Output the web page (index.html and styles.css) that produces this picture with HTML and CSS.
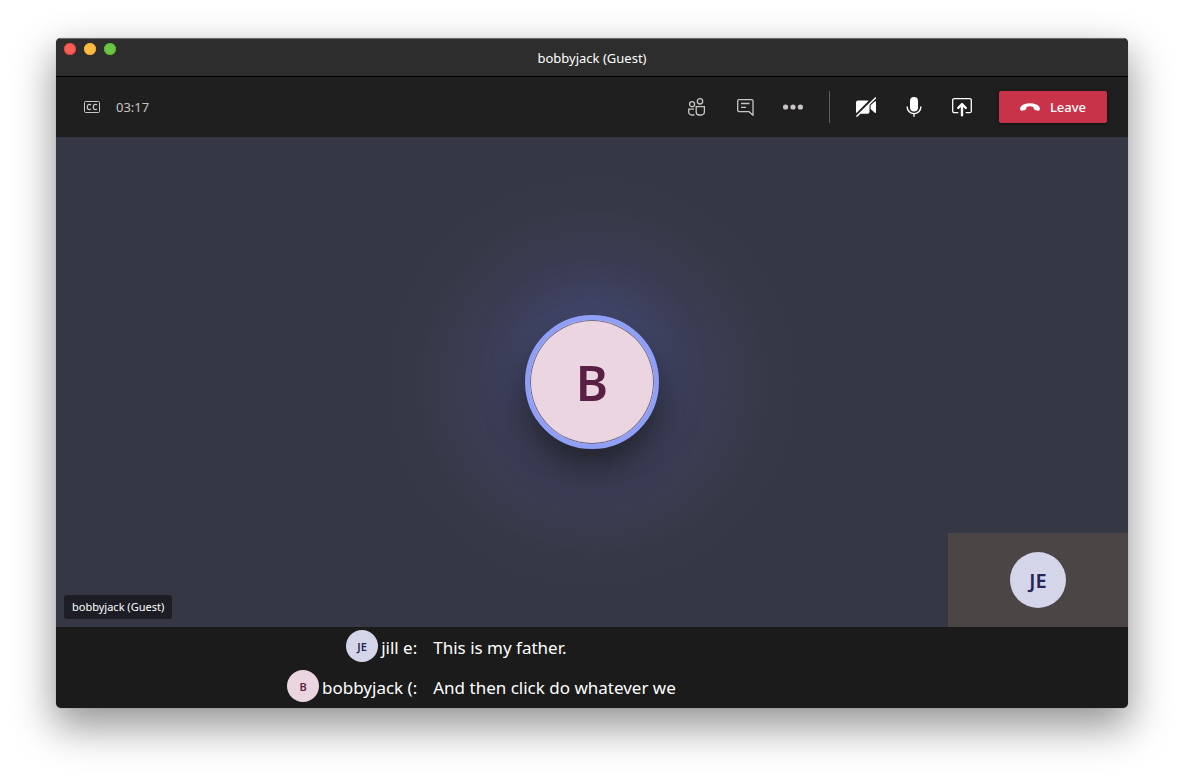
FILE: index.html
```html
<!DOCTYPE html>
<html lang="en">
<head>
<meta charset="utf-8">
<title>bobbyjack (Guest)</title>
<link rel="stylesheet" href="styles.css">
</head>
<body>
<main class="window">
  <header class="titlebar">
    <div class="lights">
      <button class="light light-close" aria-label="Close"></button>
      <button class="light light-min" aria-label="Minimize"></button>
      <button class="light light-max" aria-label="Maximize"></button>
    </div>
    <h1 class="title">bobbyjack (Guest)</h1>
  </header>

  <div class="toolbar">
    <div class="status">
      <svg class="cc" viewBox="0 0 16 12" width="16" height="12" fill="none" stroke="currentColor" aria-label="Captions on">
        <rect x=".5" y=".5" width="15" height="11" rx="1"/>
        <path d="M7 4.200C6.600 3.600 6 3.400 5.400 3.400 4 3.400 3.300 4.500 3.300 6s.8 2.600 2.100 2.600c.6 0 1.200-.3 1.600-.8M13 4.200c-.4-.6-1-.8-1.600-.8-1.400 0-2.100 1.100-2.100 2.600s.8 2.600 2.100 2.600c.6 0 1.200-.3 1.600-.8" stroke-width="1.2"/>
      </svg>
      <time class="timer">03:17</time>
    </div>
    <nav class="actions">
      <button class="tool" aria-label="People">
        <svg viewBox="0 0 20 20" width="20" height="20" fill="none" stroke="currentColor" stroke-width="1.3">
          <circle cx="5.100" cy="7.200" r="2.500"/><circle cx="13" cy="4.300" r="2.700"/>
          <path d="M9.200 9.600h8.200v5.400a3 3 0 0 1-3 3h-2.200a3 3 0 0 1-3-3zM7 12.200H1.700V15a3 3 0 0 0 3 3h2.700"/>
        </svg>
      </button>
      <button class="tool" aria-label="Chat">
        <svg viewBox="0 0 20 20" width="20" height="20" fill="none" stroke="currentColor" stroke-width="1.3" stroke-linejoin="round">
          <path d="M4.100 2.600h12.500a1.400 1.400 0 0 1 1.400 1.400v14.300l-3.900-3.600H4.500a1.800 1.800 0 0 1-1.800-1.800V4a1.400 1.400 0 0 1 1.400-1.400zM6 6.500h8.500M6 10.400h5"/>
        </svg>
      </button>
      <button class="tool" aria-label="More actions">
        <svg viewBox="0 0 20 20" width="20" height="20" fill="currentColor">
          <circle cx="2.600" cy="10" r="2.600"/><circle cx="10" cy="10" r="2.600"/><circle cx="17.400" cy="10" r="2.600"/>
        </svg>
      </button>
      <span class="divider"></span>
      <button class="tool tool-bright" aria-label="Turn camera on">
        <svg viewBox="0 0 20 20" width="20" height="20" fill="currentColor">
          <path d="M2 3.600h9.500a2 2 0 0 1 2 2v9.200a2 2 0 0 1-2 2H2a2 2 0 0 1-2-2V5.600a2 2 0 0 1 2-2zM14.600 8.200l4.200-3.700q1.200-.8 1.200.4v10.400q0 1.200-1.200.4l-4.200-3.700z"/>
          <path d="M-1 19.500 18.500 0" stroke="#1f1f1f" stroke-width="3"/>
          <path d="M.5 19.600 20 .4" stroke="currentColor" stroke-width="1.400"/>
        </svg>
      </button>
      <button class="tool tool-bright" aria-label="Mute">
        <svg viewBox="0 0 20 20" width="20" height="20" fill="none" stroke="currentColor" stroke-width="1.400">
          <rect x="6" y="0" width="8" height="14.400" rx="4" fill="currentColor" stroke="none"/>
          <path d="M3.200 9.600v.6a6.800 6.400 0 0 0 13.600 0v-.6M10 16.600v3.200"/>
        </svg>
      </button>
      <button class="tool tool-bright" aria-label="Share content">
        <svg viewBox="0 0 20 20" width="20" height="20" fill="none" stroke="currentColor" stroke-width="1.300">
          <path d="M6.300 15.700H2.200A1.500 1.500 0 0 1 .7 14.200V3.100a1.500 1.500 0 0 1 1.500-1.500h15.600a1.500 1.500 0 0 1 1.500 1.500v11.100a1.500 1.500 0 0 1-1.500 1.500h-4.100"/>
          <path d="M10 18.200V7.400M6.200 11 10 7.200l3.800 3.800" stroke-width="2.400" stroke-linecap="round" stroke-linejoin="round"/>
        </svg>
      </button>
      <button class="leave">
        <svg viewBox="0 0 20 8" width="20" height="8" fill="currentColor" aria-hidden="true">
          <path d="M10 .3c4.400 0 8 1.300 9.400 3.700.6 1 .6 2.200.2 3.100-.3.600-.8.800-1.500.600l-3.200-.8c-.7-.2-1.100-.6-1.200-1.300l-.3-1.700C12.400 3.500 11.300 3.300 10 3.300s-2.400.2-3.400.6l-.3 1.700c-.1.700-.5 1.100-1.200 1.300l-3.200.8c-.7.200-1.200 0-1.500-.6C0 6.200 0 5 .6 4 2 1.600 5.600.3 10 .3z"/>
        </svg>
        Leave
      </button>
    </nav>
  </div>

  <section class="stage">
    <div class="avatar avatar-main pink">B</div>
    <span class="name-tag">bobbyjack (Guest)</span>
    <div class="self-view"><div class="avatar avatar-self lilac">JE</div></div>
  </section>

  <section class="captions" aria-label="Live captions">
    <div class="caption">
      <div class="speaker"><span class="avatar avatar-small lilac">JE</span><span class="line">jill e:</span></div>
      <p class="line">This is my father.</p>
    </div>
    <div class="caption">
      <div class="speaker"><span class="avatar avatar-small pink">B</span><span class="line">bobbyjack (:</span></div>
      <p class="line">And then click do whatever we</p>
    </div>
  </section>
</main>
</body>
</html>
```
FILE: styles.css
```css
* { box-sizing: border-box; }

body {
  margin: 0;
  min-height: 100vh;
  padding: 38px 56px 74px;
  display: flex;
  background: #fff;
  color: #fff;
  font-family: "Noto Sans", "Open Sans", sans-serif;
}

button {
  border: 0;
  padding: 0;
  background: none;
  color: inherit;
  font: inherit;
}

svg { display: block; }

.window {
  flex: 1;
  display: flex;
  flex-direction: column;
  border-radius: 5px;
  overflow: hidden;
  background: #1b1b1b;
  box-shadow: 0 0 1px rgba(0, 0, 0, .4), 0 17px 40px 2px rgba(0, 0, 0, .42);
}

.titlebar {
  display: grid;
  grid-template-columns: 1fr auto 1fr;
  height: 39px;
  background: #2d2d2d;
  border-top: 1px solid #6c6c6c;
  border-bottom: 1px solid #000;
}

.lights {
  display: flex;
  gap: 8px;
  padding: 4px 8px;
}

.light {
  width: 12px;
  height: 12px;
  border-radius: 50%;
}

.light-close { background: #f95e57; box-shadow: inset 0 0 0 1px #e2443f; }
.light-min { background: #fdbc40; box-shadow: inset 0 0 0 1px #eba937; }
.light-max { background: #6cc644; box-shadow: inset 0 0 0 1px #58b52f; }

.title {
  margin: 0;
  align-self: center;
  font-size: 13px;
  line-height: 18px;
  font-weight: 400;
}

.toolbar {
  display: flex;
  align-items: center;
  justify-content: space-between;
  height: 60px;
  padding: 0 21px 0 28px;
  background: #1f1f1f;
  color: #c8c6c4;
}

.status {
  display: flex;
  align-items: center;
  gap: 16px;
}

.timer { font-size: 13px; line-height: 18px; }

.actions { display: flex; align-items: center; }

.tool {
  display: grid;
  place-items: center;
  width: 48px;
  height: 48px;
}

.tool-bright { color: #fff; }

.divider {
  width: 1px;
  height: 32px;
  margin: 0 12px;
  background: #605e5c;
}

.leave {
  display: flex;
  align-items: center;
  justify-content: center;
  gap: 10px;
  width: 108px;
  height: 32px;
  margin-left: 13px;
  border-radius: 2px;
  background: #c8334a;
  box-shadow: 0 1px 3px rgba(0, 0, 0, .5);
  color: #fff;
  font-size: 13px;
  font-weight: 500;
}

.stage {
  position: relative;
  flex: 1;
  display: grid;
  place-items: center;
  background: radial-gradient(circle at center, #3f415f 0, #3f415f 70px, #3c3d55 110px, #393a4c 150px, #373846 180px, #363744 210px);
}

.avatar {
  display: grid;
  place-items: center;
  flex: none;
  border-radius: 50%;
  font-weight: 600;
}

.pink { background: #ead5e1; color: #5a1f45; }
.lilac { background: #d5d5e9; color: #25255a; }

.avatar-main {
  width: 134px;
  height: 134px;
  border: 5px solid #8f9ff6;
  box-shadow: inset 0 0 0 1px #6f688c, 0 18px 36px rgba(32, 32, 36, .95), 0 -14px 44px rgba(72, 84, 130, .6);
  font-size: 49px;
}

.avatar-self { width: 56px; height: 56px; font-size: 20px; }
.avatar-small { width: 32px; height: 32px; font-size: 11px; }

.name-tag {
  position: absolute;
  left: 8px;
  bottom: 8px;
  padding: 3px 8px;
  border-radius: 3px;
  background: #1d1e25;
  font-size: 11px;
  line-height: 18px;
}

.self-view {
  position: absolute;
  right: 0;
  bottom: 0;
  display: grid;
  place-items: center;
  width: 180px;
  height: 94px;
  background: #4b4645;
}

.captions {
  display: flex;
  flex-direction: column;
  gap: 8px;
  padding: 3px 0 6px;
}

.caption {
  display: grid;
  grid-template-columns: 13fr 25fr;
  column-gap: 16px;
}

.speaker {
  display: flex;
  justify-content: flex-end;
  gap: 3px;
}

.line {
  margin: 0;
  font-size: 17px;
  line-height: 36px;
  height: 32px;
}
```
